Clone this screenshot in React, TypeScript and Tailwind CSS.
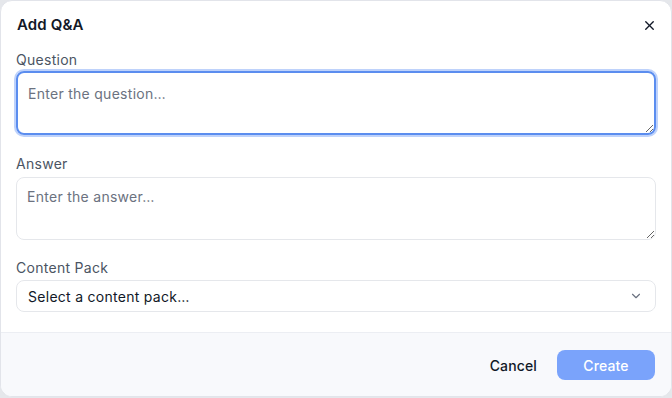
import { X, ChevronDown } from "lucide-react";

export default function App() {
  return (
    <div
      className="w-[672px] h-[398px] bg-[#e5e7eb]"
      style={{ fontFamily: "Inter, 'Noto Sans', sans-serif" }}
    >
      <div className="w-[672px] h-[397px] bg-white rounded-xl border border-[#e2e4ea] overflow-hidden flex flex-col">
        {/* Header */}
        <div className="flex items-center justify-between pl-4 pr-[14px] pt-[14px] pb-[-1px]">
          <h2 className="text-[15px] font-semibold text-[#111827] leading-5 tracking-[0.01em]">Add Q&amp;A</h2>
          <button className="text-[#111827]">
            <X size={15} strokeWidth={2.2} />
          </button>
        </div>

        {/* Body */}
        <div className="flex flex-col px-[15px] pt-[15px]">
          <label className="text-[14px] text-[#4b5563] leading-5 mb-[1px] tracking-[0.02em]">Question</label>
          <textarea
            placeholder="Enter the question…"
            className="h-[64px] rounded-lg border-2 border-[#5b8def] ring-2 ring-[#93b4f8]/60 px-[10px] py-[10px] text-[14px] tracking-[0.02em] text-[#111827] placeholder:text-[#6b7280] outline-none resize-y"
          />

          <label className="text-[14px] text-[#4b5563] leading-5 mt-[19px] mb-[3px] tracking-[0.02em]">Answer</label>
          <textarea
            placeholder="Enter the answer…"
            className="h-[63px] rounded-lg border border-[#e5e7eb] px-[10px] py-[8px] text-[14px] tracking-[0.02em] text-[#111827] placeholder:text-[#6b7280] outline-none resize-y"
          />

          <label className="text-[14px] text-[#4b5563] leading-5 mt-[18px] mb-[2px] tracking-[0.02em]">Content Pack</label>
          <button className="h-[32px] rounded-lg border border-[#e5e7eb] flex items-center justify-between pl-[11px] pr-[12px] text-[14px] tracking-[0.02em] text-[#111827]">
            <span>Select a content pack…</span>
            <ChevronDown size={14} className="text-[#6b7280]" />
          </button>
        </div>

        {/* Footer */}
        <div className="mt-[20px] flex-1 bg-[#f8f9fc] border-t border-[#eceef3] flex items-center justify-end gap-5 pr-[16px] pt-[1px]">
          <button className="text-[14px] font-medium text-[#111827] tracking-[0.01em]">Cancel</button>
          <button className="w-[98px] h-[30px] rounded-lg bg-[#7aa3fb] text-white text-[14px] font-medium tracking-[0.01em]">
            Create
          </button>
        </div>
      </div>
    </div>
  );
}
